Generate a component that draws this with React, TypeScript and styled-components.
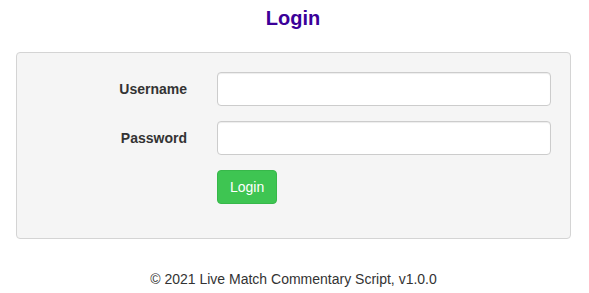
import styled, { createGlobalStyle } from "styled-components";

const GlobalStyle = createGlobalStyle`
  * { box-sizing: border-box; }
  body {
    margin: 0;
    font-family: "Liberation Sans", Arial, sans-serif;
    font-size: 14px;
    line-height: 1.42857;
    color: #333;
    background: #fff;
  }
`;

export default function App() {
  return (
    <>
      <GlobalStyle />
      <Page>
        <Title>Login</Title>
        <Well>
          <Form onSubmit={(e) => e.preventDefault()}>
            <FormRow>
              <Label htmlFor="username">Username</Label>
              <Field>
                <Input id="username" type="text" />
              </Field>
            </FormRow>
            <FormRow>
              <Label htmlFor="password">Password</Label>
              <Field>
                <Input id="password" type="password" />
              </Field>
            </FormRow>
            <FormRow>
              <Spacer />
              <Field>
                <SubmitButton type="submit">Login</SubmitButton>
              </Field>
            </FormRow>
          </Form>
        </Well>
        <Footer>© 2021 Live Match Commentary Script, v1.0.0</Footer>
      </Page>
    </>
  );
}

/* --- Styled Components --- */

const Page = styled.div`
  padding: 0 19px 0 16px;
`;

const Title = styled.h3`
  margin: 7px 0 23px;
  text-align: center;
  font-size: 20px;
  font-weight: 700;
  line-height: 22px;
  color: #3b0099;
`;

const Well = styled.div`
  width: 555px;
  padding: 19px;
  background: #f5f5f5;
  border: 1px solid #d4d4d4;
  border-radius: 4px;
`;

const Form = styled.form`
  display: flex;
  flex-direction: column;
  gap: 15px;
  margin-bottom: 15px;
`;

const FormRow = styled.div`
  display: grid;
  grid-template-columns: 166px 1fr;
  column-gap: 30px;
  margin-left: -15px;
`;

const Label = styled.label`
  padding-top: 7px;
  text-align: right;
  font-weight: 700;
  font-size: 14px;
  line-height: 20px;
  color: #333;
`;

const Spacer = styled.div``;

const Field = styled.div`
  display: flex;
  align-items: flex-start;
`;

const Input = styled.input`
  width: 100%;
  height: 34px;
  padding: 6px 12px;
  font-family: inherit;
  font-size: 14px;
  color: #555;
  background: #fff;
  border: 1px solid #ccc;
  border-radius: 4px;
  box-shadow: inset 0 1px 1px rgba(0, 0, 0, 0.075);
  outline: none;
`;

const SubmitButton = styled.button`
  height: 34px;
  padding: 6px 12px;
  font-family: inherit;
  font-size: 14px;
  line-height: 20px;
  color: #fff;
  background: #3ec552;
  border: 1px solid #37b84a;
  border-radius: 4px;
  cursor: pointer;
`;

const Footer = styled.footer`
  margin-top: 30px;
  width: 555px;
  text-align: center;
  font-size: 14px;
  line-height: 20px;
  color: #333;
`;
